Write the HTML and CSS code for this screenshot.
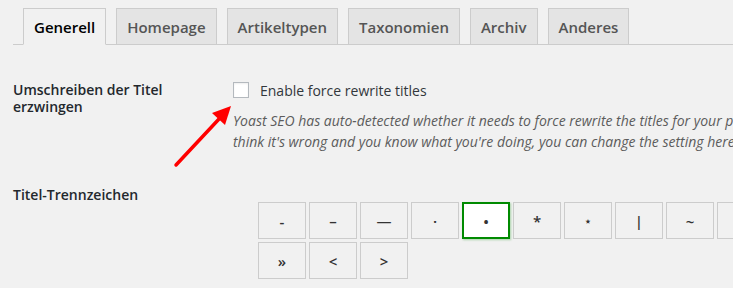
FILE: index.html
```html
<!DOCTYPE html>
<html lang="de">
<head>
  <meta charset="UTF-8" />
  <meta name="viewport" content="width=device-width, initial-scale=1" />
  <title>Yoast SEO - Titel &amp; Metas</title>
  <link rel="stylesheet" href="styles.css">
</head>
<body>
  <div class="wrap">
    <nav class="tabs">
      <a href="#" class="tab active">Generell</a>
      <a href="#" class="tab">Homepage</a>
      <a href="#" class="tab">Artikeltypen</a>
      <a href="#" class="tab">Taxonomien</a>
      <a href="#" class="tab">Archiv</a>
      <a href="#" class="tab">Anderes</a>
    </nav>

    <div class="form">
      <div class="row">
        <label class="label" for="forcerewrite">Umschreiben der Titel erzwingen</label>
        <div class="field">
          <div class="check">
            <input type="checkbox" id="forcerewrite" />
            <label for="forcerewrite">Enable force rewrite titles</label>
          </div>
          <p class="desc">Yoast SEO has auto-detected whether it needs to force rewrite the titles for your pages, if you think it's wrong and you know what you're doing, you can change the setting here.</p>
        </div>
      </div>

      <div class="row">
        <div class="label">Titel-Trennzeichen</div>
        <div class="field">
          <div class="separators">
            <button class="sep">-</button>
            <button class="sep">&ndash;</button>
            <button class="sep">&mdash;</button>
            <button class="sep">&middot;</button>
            <button class="sep selected">&bull;</button>
            <button class="sep">*</button>
            <button class="sep small">&#8902;</button>
            <button class="sep">|</button>
            <button class="sep">~</button>
            <button class="sep">&laquo;</button>
            <button class="sep">&raquo;</button>
            <button class="sep">&lt;</button>
            <button class="sep">&gt;</button>
          </div>
        </div>
      </div>
    </div>

    <!-- annotation arrow pointing at the checkbox -->
    <svg class="arrow" width="240" height="170" viewBox="0 0 240 170">
      <line x1="176" y1="157" x2="219" y2="111" stroke="#ff0000" stroke-width="3.5" stroke-linecap="round" />
      <polygon points="231,98 212,105 225,117" fill="#ff0000" />
    </svg>
  </div>
</body>
</html>
```

FILE: styles.css
```css
* {
  box-sizing: border-box;
}

body {
  margin: 0;
  background: #f1f1f1;
  color: #23282d;
  font-family: 'Open Sans', 'Noto Sans', sans-serif;
  overflow: hidden;
}

.wrap {
  position: relative;
  width: 1000px;
  padding-left: 13px;
}

.tabs {
  display: flex;
  gap: 10px;
  margin-top: 8px;
  padding-left: 10px;
  border-bottom: 1px solid #ccc;
}

.tab {
  height: 37px;
  margin-bottom: -1px;
  padding: 0 10px;
  display: flex;
  align-items: center;
  font-size: 15px;
  font-weight: 600;
  color: #555;
  text-decoration: none;
  background: #e4e4e4;
  border: 1px solid #ccc;
}

.tab.active {
  background: #f1f1f1;
  color: #000;
  border-bottom-color: #f1f1f1;
}

.row {
  display: flex;
}

.label {
  width: 220px;
  flex-shrink: 0;
  padding-right: 40px;
  font-size: 14px;
  font-weight: 600;
  line-height: 17px;
}

.row:first-child {
  padding-top: 36px;
}

.row:last-child {
  padding-top: 34px;
}

.check {
  display: flex;
  align-items: center;
  gap: 11px;
  height: 18px;
  font-size: 14px;
  color: #32373c;
}

.check input {
  margin: 0;
  width: 16px;
  height: 16px;
  appearance: none;
  background: #fff;
  border: 1px solid #b4b9be;
  box-shadow: inset 0 1px 2px rgba(0,0,0,0.07);
}

.desc {
  width: 584px;
  margin: 11px 0 0;
  font-size: 14px;
  font-style: italic;
  line-height: 21px;
  color: #5c5c5c;
}

.separators {
  width: 520px;
  margin: 16px 0 0 25px;
  display: flex;
  flex-wrap: wrap;
  gap: 3px;
}

.sep {
  width: 48px;
  height: 37px;
  padding: 0;
  font-family: 'Open Sans', 'DejaVu Sans', sans-serif;
  font-size: 15px;
  font-weight: 600;
  color: #333;
  background: #f1f1f1;
  border: 1px solid #ccc;
}

.sep.small {
  font-size: 11px;
}

.sep.selected {
  background: #fff;
  border: 2px solid #008a00;
  box-shadow: 1px 1px 2px rgba(0,138,0,0.3);
}

.arrow {
  position: absolute;
  top: 0;
  left: 0;
  pointer-events: none;
}
```
